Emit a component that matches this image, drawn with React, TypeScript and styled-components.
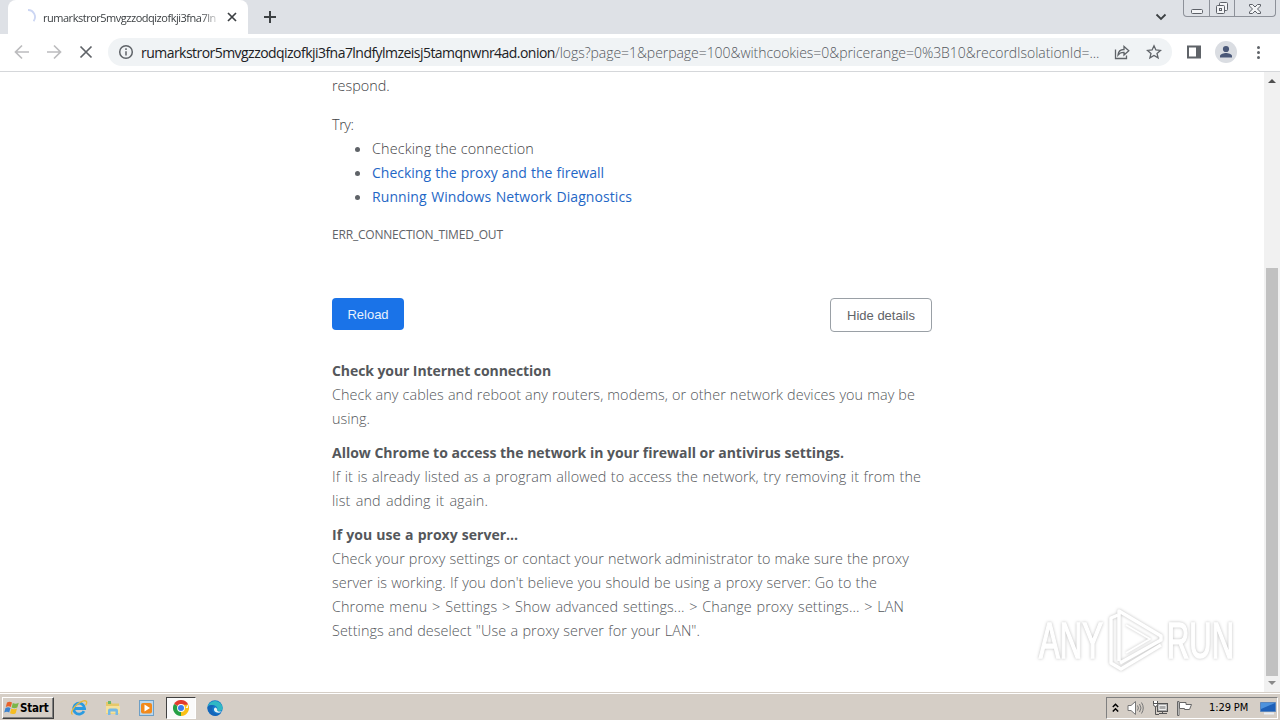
import styled, { createGlobalStyle, css } from 'styled-components';

const App = () => {
  return (
    <>
      <GlobalStyle />
      <Desktop>
        <TabStrip>
          <Tab>
            <Spinner viewBox="0 0 16 16">
              <path d="M8 1a7 7 0 0 1 5.6 11.2" />
            </Spinner>
            <TabTitle>rumarkstror5mvgzzodqizofkji3fna7ln</TabTitle>
            <TabClose viewBox="0 0 16 16">
              <path d="M4 4l8 8M12 4l-8 8" />
            </TabClose>
          </Tab>
          <NewTab viewBox="0 0 16 16">
            <path d="M8 2v12M2 8h12" />
          </NewTab>
          <TabSearch viewBox="0 0 12 8">
            <path d="M1.5 1.5L6 6l4.500-4.500" />
          </TabSearch>
          <WindowButtons>
            <WindowButton $width={25}>
              <svg width="14" height="6" viewBox="0 0 14 6">
                <rect x="1.500" y="0.500" width="11" height="4" rx="1" />
              </svg>
            </WindowButton>
            <WindowButton $width={25}>
              <svg width="14" height="14" viewBox="0 0 14 14">
                <rect x="4.500" y="1.500" width="8" height="8" rx="1" />
                <rect x="1.500" y="4.500" width="8" height="8" rx="1" />
                <rect x="4.500" y="7.500" width="2" height="2" />
              </svg>
            </WindowButton>
            <WindowButton $width={41}>
              <svg width="14" height="12" viewBox="0 0 14 12">
                <path d="M1.500 1.500h3L7 4l2.500-2.500h3v1.500L9.500 6l3 3v1.500h-3L7 8l-2.500 2.500h-3V9l3-3-3-3z" />
              </svg>
            </WindowButton>
          </WindowButtons>
        </TabStrip>

        <Toolbar>
          <NavIcon viewBox="0 0 16 16" $color="#bcbcbe">
            <path d="M15 8H2M8 1.500L1.500 8 8 14.500" />
          </NavIcon>
          <NavIcon viewBox="0 0 16 16" $color="#bcbcbe">
            <path d="M1 8h13M8 1.500L14.500 8 8 14.500" />
          </NavIcon>
          <NavIcon viewBox="0 0 16 16" $color="#5f6368">
            <path d="M2.500 2.500l11 11M13.500 2.500l-11 11" />
          </NavIcon>
          <AddressBar>
            <InfoIcon viewBox="0 0 16 16">
              <circle cx="8" cy="8" r="6.300" />
              <path d="M8 7.200v4.300M8 4.200v1.700" />
            </InfoIcon>
            <Url>
              <Host>rumarkstror5mvgzzodqizofkji3fna7lndfylmzeisj5tamqnwnr4ad.onion</Host>
              <Path>/logs?page=1&amp;perpage=100&amp;withcookies=0&amp;pricerange=0%3B10&amp;recordIsolationId=...</Path>
            </Url>
            <ShareIcon viewBox="0 0 16 16">
              <path d="M1.500 5.500v9h11v-3" />
              <path d="M4 11c.3-3.500 2.500-5.500 6-5.500V2.500l4.800 4.300L10 11V8.300C7.500 8.200 5.500 9 4 11z" />
            </ShareIcon>
            <StarIcon viewBox="0 0 16 16">
              <path d="M8 1.800l1.900 4.200 4.600.4-3.500 3 1.100 4.500L8 11.500l-4.100 2.400L5 9.400l-3.500-3 4.600-.4z" />
            </StarIcon>
          </AddressBar>
          <SidePanelIcon viewBox="0 0 16 16">
            <path d="M1 1.500h14v13H1zM3 3.500v9h7v-9z" fillRule="evenodd" />
          </SidePanelIcon>
          <Avatar>
            <svg width="22" height="22" viewBox="0 0 22 22">
              <circle cx="11" cy="8" r="3.100" />
              <path d="M5 16.500v-1.500c0-2 4-3 6-3s6 1 6 3v1.500z" />
            </svg>
          </Avatar>
          <MenuDots>
            <i />
            <i />
            <i />
          </MenuDots>
        </Toolbar>

        <Viewport>
          <ErrorPage>
            <Line $width={57} $tone="dark">respond.</Line>
            <Suggestions>
              <Line $width={23} $spacing={-0.4} $tone="dark">Try:</Line>
              <List>
                <li><Line $width={162} $spacing={0.12} $tone="dark">Checking the connection</Line></li>
                <li><Line as="a" $width={232} $tone="link">Checking the proxy and the firewall</Line></li>
                <li><Line as="a" $width={260} $spacing={0.08} $tone="link">Running Windows Network Diagnostics</Line></li>
              </List>
            </Suggestions>
            <ErrorCode>ERR_CONNECTION_TIMED_OUT</ErrorCode>
            <Buttons>
              <ReloadButton>Reload</ReloadButton>
              <DetailsButton>Hide details</DetailsButton>
            </Buttons>
            <Detail>
              <Line $width={219} $spacing={-0.08} $tone="bold">Check your Internet connection</Line>
              <Line $width={583} $spacing={0.08}>Check any cables and reboot any routers, modems, or other network devices you may be</Line>
              <Line $width={38}>using.</Line>
            </Detail>
            <Detail>
              <Line $width={512} $spacing={-0.02} $tone="bold">Allow Chrome to access the network in your firewall or antivirus settings.</Line>
              <Line $width={589} $spacing={0.08}>If it is already listed as a program allowed to access the network, try removing it from the</Line>
              <Line $width={156} $spacing={0.12}>list and adding it again.</Line>
            </Detail>
            <Detail>
              <Line $width={186} $tone="bold">If you use a proxy server...</Line>
              <Line $width={577} $spacing={0.06}>Check your proxy settings or contact your network administrator to make sure the proxy</Line>
              <Line $width={545} $spacing={0.06}>server is working. If you don't believe you should be using a proxy server: Go to the</Line>
              <Line $width={572} $spacing={0.08}>Chrome menu &gt; Settings &gt; Show advanced settings... &gt; Change proxy settings... &gt; LAN</Line>
              <Line $width={368} $spacing={0.06}>Settings and deselect "Use a proxy server for your LAN".</Line>
            </Detail>
          </ErrorPage>
          <Scrollbar>
            <Arrow viewBox="0 0 8 4"><path d="M0 4l4-4 4 4z" fill="#505050" /></Arrow>
            <Thumb />
            <Arrow viewBox="0 0 8 4"><path d="M0 0l4 4 4-4z" fill="#8a8a8a" /></Arrow>
          </Scrollbar>
        </Viewport>

        <Taskbar>
          <StartButton>
            <WindowsFlag />
            Start
          </StartButton>
          <QuickLaunch>
            <LaunchItem><InternetExplorer /></LaunchItem>
            <LaunchItem><Explorer /></LaunchItem>
            <LaunchItem><MediaPlayer /></LaunchItem>
            <LaunchItem $active><Chrome /></LaunchItem>
            <LaunchItem><Edge /></LaunchItem>
          </QuickLaunch>
          <Tray>
            <svg width="7" height="10" viewBox="0 0 7 10" fill="none" stroke="#000" strokeWidth="1.500">
              <path d="M.8 4l2.700-2.700L6.200 4M.8 8.500l2.700-2.700 2.700 2.700" />
            </svg>
            <Speaker />
            <Network />
            <Flag />
            <Clock>1:29 PM</Clock>
            <ShowDesktop />
          </Tray>
        </Taskbar>

        <Watermark viewBox="0 0 210 76">
          <g fill="none" strokeLinejoin="round" strokeWidth="3.500">
            <path d="M88 12l-7 3v45l10 6 40-24" />
            <path d="M89 58V8l42 25v4L90 60" />
            <path d="M96 22l24 14-24 14" strokeWidth="2" />
          </g>
          <text x="9" y="55" textLength="64" lengthAdjust="spacingAndGlyphs">ANY</text>
          <text x="137" y="55" textLength="67" lengthAdjust="spacingAndGlyphs">RUN</text>
        </Watermark>
      </Desktop>
    </>
  );
};

export default App;

const WindowsFlag = () => (
  <svg width="16" height="16" viewBox="0 0 16 16">
    <path d="M3 2.500c2-1.300 3.600-1 5 0L6.800 7c-1.500-1-3.200-1.100-5 0z" fill="#e8622a" />
    <path d="M8.800 3c1.800 1 3.600 1 6-.2L13.300 7.500c-2 1.100-3.900 1-5.700 0z" fill="#7ab648" />
    <path d="M1.500 8c1.900-1.200 3.500-1 5 0l-1.300 4.600c-1.500-1-3-1-5 0z" fill="#3b83d0" />
    <path d="M7.300 8.500c1.800 1 3.700 1 5.700 0l-1.300 4.700c-2 1.200-4 1-5.700 0z" fill="#f5bd22" />
  </svg>
);

const InternetExplorer = () => (
  <svg width="18" height="18" viewBox="0 0 18 18" fill="none">
    <path d="M14 12.200A5.500 5.500 0 1 1 14.600 9.500H5" stroke="#2b9be0" strokeWidth="2.800" />
    <path d="M2.500 15.500C0 14 3 8.500 8 4.800 12 1.800 16 .8 16.600 2.800c.3 1-.3 2.500-1 3.500" stroke="#e9b93b" strokeWidth="1.300" />
  </svg>
);

const Explorer = () => (
  <svg width="18" height="18" viewBox="0 0 18 18">
    <path d="M2 3h5l1 1.500h7V15H2z" fill="#e6c869" />
    <path d="M4 2h3v3H4z" fill="#6cb86a" />
    <path d="M2 7h14v7.500H2z" fill="#f5e19b" />
    <path d="M4 16v-4.500a2 2 0 0 1 2-2h6a2 2 0 0 1 2 2V16h-2.500v-3.500h-5V16z" fill="#75b9e5" />
  </svg>
);

const MediaPlayer = () => (
  <svg width="18" height="18" viewBox="0 0 18 18">
    <rect x="1.500" y="1.500" width="14" height="15" fill="#b9d8f0" stroke="#6e9fc5" />
    <rect x="3" y="4" width="11" height="10.500" rx="2" fill="#f28a1c" />
    <path d="M6.500 5.500l5.500 3.500-5.500 3.500z" fill="#fff" />
  </svg>
);

const Chrome = () => (
  <svg width="16" height="16" viewBox="0 0 16 16">
    <path d="M8 8L1.070 4A8 8 0 0 1 14.930 4z" fill="#e33b2e" />
    <path d="M8 8h6.930V4A8 8 0 0 1 8 16z" fill="#fbc116" />
    <path d="M8 8v8A8 8 0 0 1 1.070 4z" fill="#26a045" />
    <path d="M8 4.400h6.930L11.500 9.500 8 16z" fill="#fbc116" />
    <path d="M8 4.500h7.100L14.900 4 8 2z" fill="#e33b2e" />
    <circle cx="8" cy="8" r="3.900" fill="#fff" />
    <circle cx="8" cy="8" r="3" fill="#3b7ded" />
  </svg>
);

const Edge = () => (
  <svg width="16" height="16" viewBox="0 0 16 16">
    <circle cx="8" cy="8" r="7.700" fill="#1478cc" />
    <path d="M.5 7A7.700 7.700 0 0 1 15.700 8c0 2-1.500 3-3.500 3-2 0-2.600-.8-2-1.700C11 7.500 8.500 5.300 6 5.300.9 5.200.5 7 .5 7z" fill="#30b8c4" />
    <path d="M.5 7.500C1.300 4.500 5 4.300 7.500 5.800 4 7 4.500 12 8.500 13.500c2 .8 4 .3 5.500-.5-3.500 4.500-9 3-11 .5A8 8 0 0 1 .5 7.500z" fill="#1565b8" />
    <path d="M7.300 8.200c-1.300 2.500 1.500 5.300 5.700 4.200l2.200-1.400c-2 1-5.500.9-5.100-1.400.1-.8-1.600-3.300-2.800-1.400z" fill="#e6f4f5" />
  </svg>
);

const Speaker = () => (
  <svg width="17" height="16" viewBox="0 0 17 16" fill="none" stroke="#777">
    <path d="M1 5.500h3L8.500 1.500v13L4 10.500H1z" fill="#fff" />
    <path d="M10.500 5.500q1.800 2.500 0 5M12.500 4q3 4 0 8M14.500 2.500q3.500 5.500 0 11" />
  </svg>
);

const Network = () => (
  <svg width="16" height="16" viewBox="0 0 16 16" fill="none" stroke="#555">
    <rect x="5.500" y="3.500" width="10" height="8" fill="#aaa" />
    <path d="M7 5.500h7v4H7z" stroke="#eee" />
    <path d="M7 13.500h8M10.500 12v2M3.500 6v8.500H7" />
    <path d="M1.500 1v3.500q0 2 2 2t2-2V1M1 3.500h5" fill="#fff" />
  </svg>
);

const Flag = () => (
  <svg width="17" height="16" viewBox="0 0 17 16" fill="#fff" stroke="#666">
    <path d="M1.500 1.500h1.500v14H1.500z" />
    <path d="M3.500 2.500h6.500v2h5.500l-2 5H8.500v-1h-5z" />
  </svg>
);

const ShowDesktop = () => (
  <svg width="16" height="16" viewBox="0 0 16 16">
    <path d="M.5 2.500h15v9H.5z" fill="#1e60b8" stroke="#5a86bd" />
    <path d="M1 3h14L1 9z" fill="#4d92dd" />
    <path d="M4 13.500h10" stroke="#e8eef5" strokeWidth="2" />
  </svg>
);

const GlobalStyle = createGlobalStyle`
  body {
    margin: 0;
    overflow: hidden;
    background: #fff;
    font-family: 'Open Sans', 'Noto Sans', sans-serif;
  }
  * {
    box-sizing: border-box;
  }
  svg {
    display: block;
    flex-shrink: 0;
  }
`;

const Desktop = styled.div`
  position: relative;
  width: 1280px;
  height: 720px;
  display: flex;
  flex-direction: column;
  overflow: hidden;
`;

const TabStrip = styled.div`
  height: 34px;
  display: flex;
  align-items: flex-start;
  padding-left: 8px;
  background: #dee1e6;
`;

const Tab = styled.div`
  width: 240px;
  height: 34px;
  display: flex;
  align-items: center;
  padding-left: 12px;
  border-radius: 8px 8px 0 0;
  background: #fff;
`;

const Spinner = styled.svg`
  width: 16px;
  height: 16px;
  fill: none;
  stroke: #ccd6f3;
  stroke-width: 1.8;
`;

const TabTitle = styled.div`
  width: 174px;
  margin-left: 7px;
  white-space: nowrap;
  font-size: 11px;
  letter-spacing: -0.48px;
  color: #3c4043;
  mask-image: linear-gradient(to right, #000 158px, transparent 178px);
`;

const TabClose = styled.svg`
  width: 16px;
  height: 16px;
  margin-left: 7px;
  stroke: #3c4043;
  stroke-width: 1.7;
`;

const NewTab = styled.svg`
  width: 16px;
  height: 16px;
  margin: 9px 0 0 14px;
  stroke: #3c4043;
  stroke-width: 2;
`;

const TabSearch = styled.svg`
  width: 12px;
  height: 8px;
  margin: 13px 16px 0 auto;
  fill: none;
  stroke: #3c4043;
  stroke-width: 1.8;
`;

const WindowButtons = styled.div`
  height: 17px;
  display: flex;
  margin-right: 4px;
  border: 1px solid #8d9199;
  border-top: 0;
  border-radius: 0 0 4px 4px;
`;

const WindowButton = styled.div<{ $width: number }>`
  width: ${({ $width }) => $width}px;
  height: 16px;
  display: flex;
  align-items: flex-end;
  justify-content: center;
  padding-bottom: 1px;

  & + & {
    border-left: 1px solid #8d9199;
  }

  svg {
    fill: #f3f4f6;
    stroke: #5d6168;
  }
`;

const Toolbar = styled.div`
  height: 38px;
  display: flex;
  align-items: center;
  padding: 0 16px 1px 14px;
  border-bottom: 1px solid #d5d7da;
  background: #fff;
`;

const NavIcon = styled.svg<{ $color: string }>`
  width: 16px;
  height: 16px;
  margin-right: 16px;
  fill: none;
  stroke: ${({ $color }) => $color};
  stroke-width: 1.7;
`;

const AddressBar = styled.div`
  width: 1064px;
  height: 28px;
  display: flex;
  align-items: center;
  margin-left: -2px;
  padding: 0 10px;
  border-radius: 14px;
  background: #f0f3f5;
`;

const InfoIcon = styled.svg`
  width: 16px;
  height: 16px;
  fill: none;
  stroke: #5f6368;
  stroke-width: 1.5;
`;

const Url = styled.div`
  width: 960px;
  display: flex;
  margin-left: 7px;
  padding-top: 1px;
  font-size: 14px;
  line-height: 20px;
  white-space: nowrap;
`;

const Host = styled.span`
  width: 414px;
  letter-spacing: -0.54px;
  color: #202124;
`;

const Path = styled.span`
  font-weight: 300;
  letter-spacing: -0.05px;
  color: #54585d;
`;

const addressIcon = css`
  width: 16px;
  height: 16px;
  fill: none;
  stroke: #5f6368;
  stroke-width: 1.3;
`;

const ShareIcon = styled.svg`
  ${addressIcon}
  margin-left: 13px;
`;

const StarIcon = styled.svg`
  ${addressIcon}
  margin-left: 16px;
`;

const SidePanelIcon = styled.svg`
  width: 16px;
  height: 16px;
  margin-left: 14px;
  fill: #5f6368;
`;

const Avatar = styled.div`
  margin-left: 13px;
  border-radius: 50%;
  background: #dadde2;
  fill: #4a5878;
`;

const MenuDots = styled.div`
  width: 3px;
  display: flex;
  flex-direction: column;
  gap: 2px;
  margin-left: 20px;

  i {
    width: 3px;
    height: 3px;
    border-radius: 50%;
    background: #5f6368;
  }
`;

const Viewport = styled.div`
  height: 620px;
  display: flex;
  justify-content: space-between;
  padding-left: 332px;
  background: #fff;
`;

const ErrorPage = styled.div`
  width: 600px;
  padding-top: 2px;
`;

const tones = {
  normal: css`color: #54575b; font-weight: 300;`,
  dark: css`color: #3f4246; font-weight: 300;`,
  link: css`color: #1f67c6; font-size: 14px;`,
  bold: css`color: #54575b; font-weight: 700; font-size: 14px;`,
};

// one typeset line, its words spread over the given width
const Line = styled.div<{ $width: number; $spacing?: number; $tone?: keyof typeof tones }>`
  display: block;
  width: ${({ $width }) => $width}px;
  height: 24px;
  font-size: 14.4px;
  line-height: 24px;
  letter-spacing: ${({ $spacing = 0 }) => $spacing}px;
  white-space: nowrap;
  text-align: justify;
  text-align-last: justify;
  ${({ $tone = 'normal' }) => tones[$tone]}
`;

const Suggestions = styled.div`
  margin-top: 15px;
`;

const List = styled.ul`
  margin: -1px 0 0;
  padding-left: 40px;
  color: #5f6368;
  font-size: 15px;
  line-height: 24px;

  li {
    height: 24px;
  }
`;

const ErrorCode = styled.div`
  margin-top: 18px;
  font-size: 12px;
  line-height: 18px;
  letter-spacing: -0.2px;
  color: #5f6368;
`;

const Buttons = styled.div`
  display: flex;
  justify-content: space-between;
  align-items: flex-start;
  margin-top: 54px;
`;

const Button = styled.button`
  padding: 0;
  border-radius: 4px;
  font-family: 'Liberation Sans', Arial, sans-serif;
  font-size: 13px;
`;

const ReloadButton = styled(Button)`
  width: 72px;
  height: 32px;
  border: 0;
  background: #1a73e8;
  color: #e8f1fd;
`;

const DetailsButton = styled(Button)`
  width: 102px;
  height: 34px;
  border: 1px solid #9aa0a6;
  background: #fff;
  color: #5f6368;
`;

const Detail = styled.section`
  margin-top: 10px;

  ${Buttons} + & {
    margin-top: 27px;
  }
`;

const Scrollbar = styled.div`
  width: 16px;
  display: flex;
  flex-direction: column;
  align-items: center;
  padding: 7px 0;
  background: #f1f1f1;
`;

const Arrow = styled.svg`
  width: 8px;
  height: 4px;
`;

const Thumb = styled.div`
  width: 12px;
  height: 408px;
  margin: auto 0 5px;
  background: #c1c1c1;
`;

const Taskbar = styled.div`
  height: 28px;
  display: flex;
  align-items: center;
  padding: 2px 2px 0;
  border-top: 1px solid #d5cec6;
  background: #d5cec6;
  box-shadow: inset 0 1px #fff;
`;

const StartButton = styled.div`
  width: 52px;
  height: 22px;
  display: flex;
  align-items: center;
  padding-left: 1px;
  border: 1px solid;
  border-color: #fff #404040 #404040 #fff;
  box-shadow: inset -1px -1px #808080;
  font-family: 'DejaVu Sans Condensed', 'DejaVu Sans', sans-serif;
  font-size: 11.5px;
  font-weight: 700;
  letter-spacing: -0.2px;
  color: #000;
`;

const QuickLaunch = styled.div`
  display: flex;
  gap: 4px;
  margin-left: 10px;
`;

const LaunchItem = styled.div<{ $active?: boolean }>`
  width: 30px;
  height: 22px;
  display: flex;
  align-items: center;
  justify-content: center;

  ${({ $active }) => $active && css`
    border: 1px solid;
    border-color: #404040 #fff #fff #404040;
    background: #fafafa;
  `}
`;

const Tray = styled.div`
  width: 172px;
  height: 22px;
  display: flex;
  align-items: center;
  margin-left: auto;
  padding-left: 5px;
  gap: 8px;
  border: 1px solid;
  border-color: #808080 #fff #fff #808080;
`;

const Clock = styled.div`
  width: 43px;
  margin-left: 8px;
  font-family: 'DejaVu Sans Condensed', 'DejaVu Sans', sans-serif;
  font-size: 11px;
  letter-spacing: -0.1px;
  white-space: nowrap;
  color: #000;
`;

const Watermark = styled.svg`
  position: absolute;
  left: 1030px;
  top: 603px;
  width: 210px;
  height: 76px;
  fill: #fff;
  stroke: #fff;
  overflow: visible;
  filter: drop-shadow(0 0 1.5px rgba(0, 0, 0, 0.26));

  text {
    font-family: 'Liberation Sans', Arial, sans-serif;
    font-size: 50px;
    stroke-width: 1.5;
  }
`;
